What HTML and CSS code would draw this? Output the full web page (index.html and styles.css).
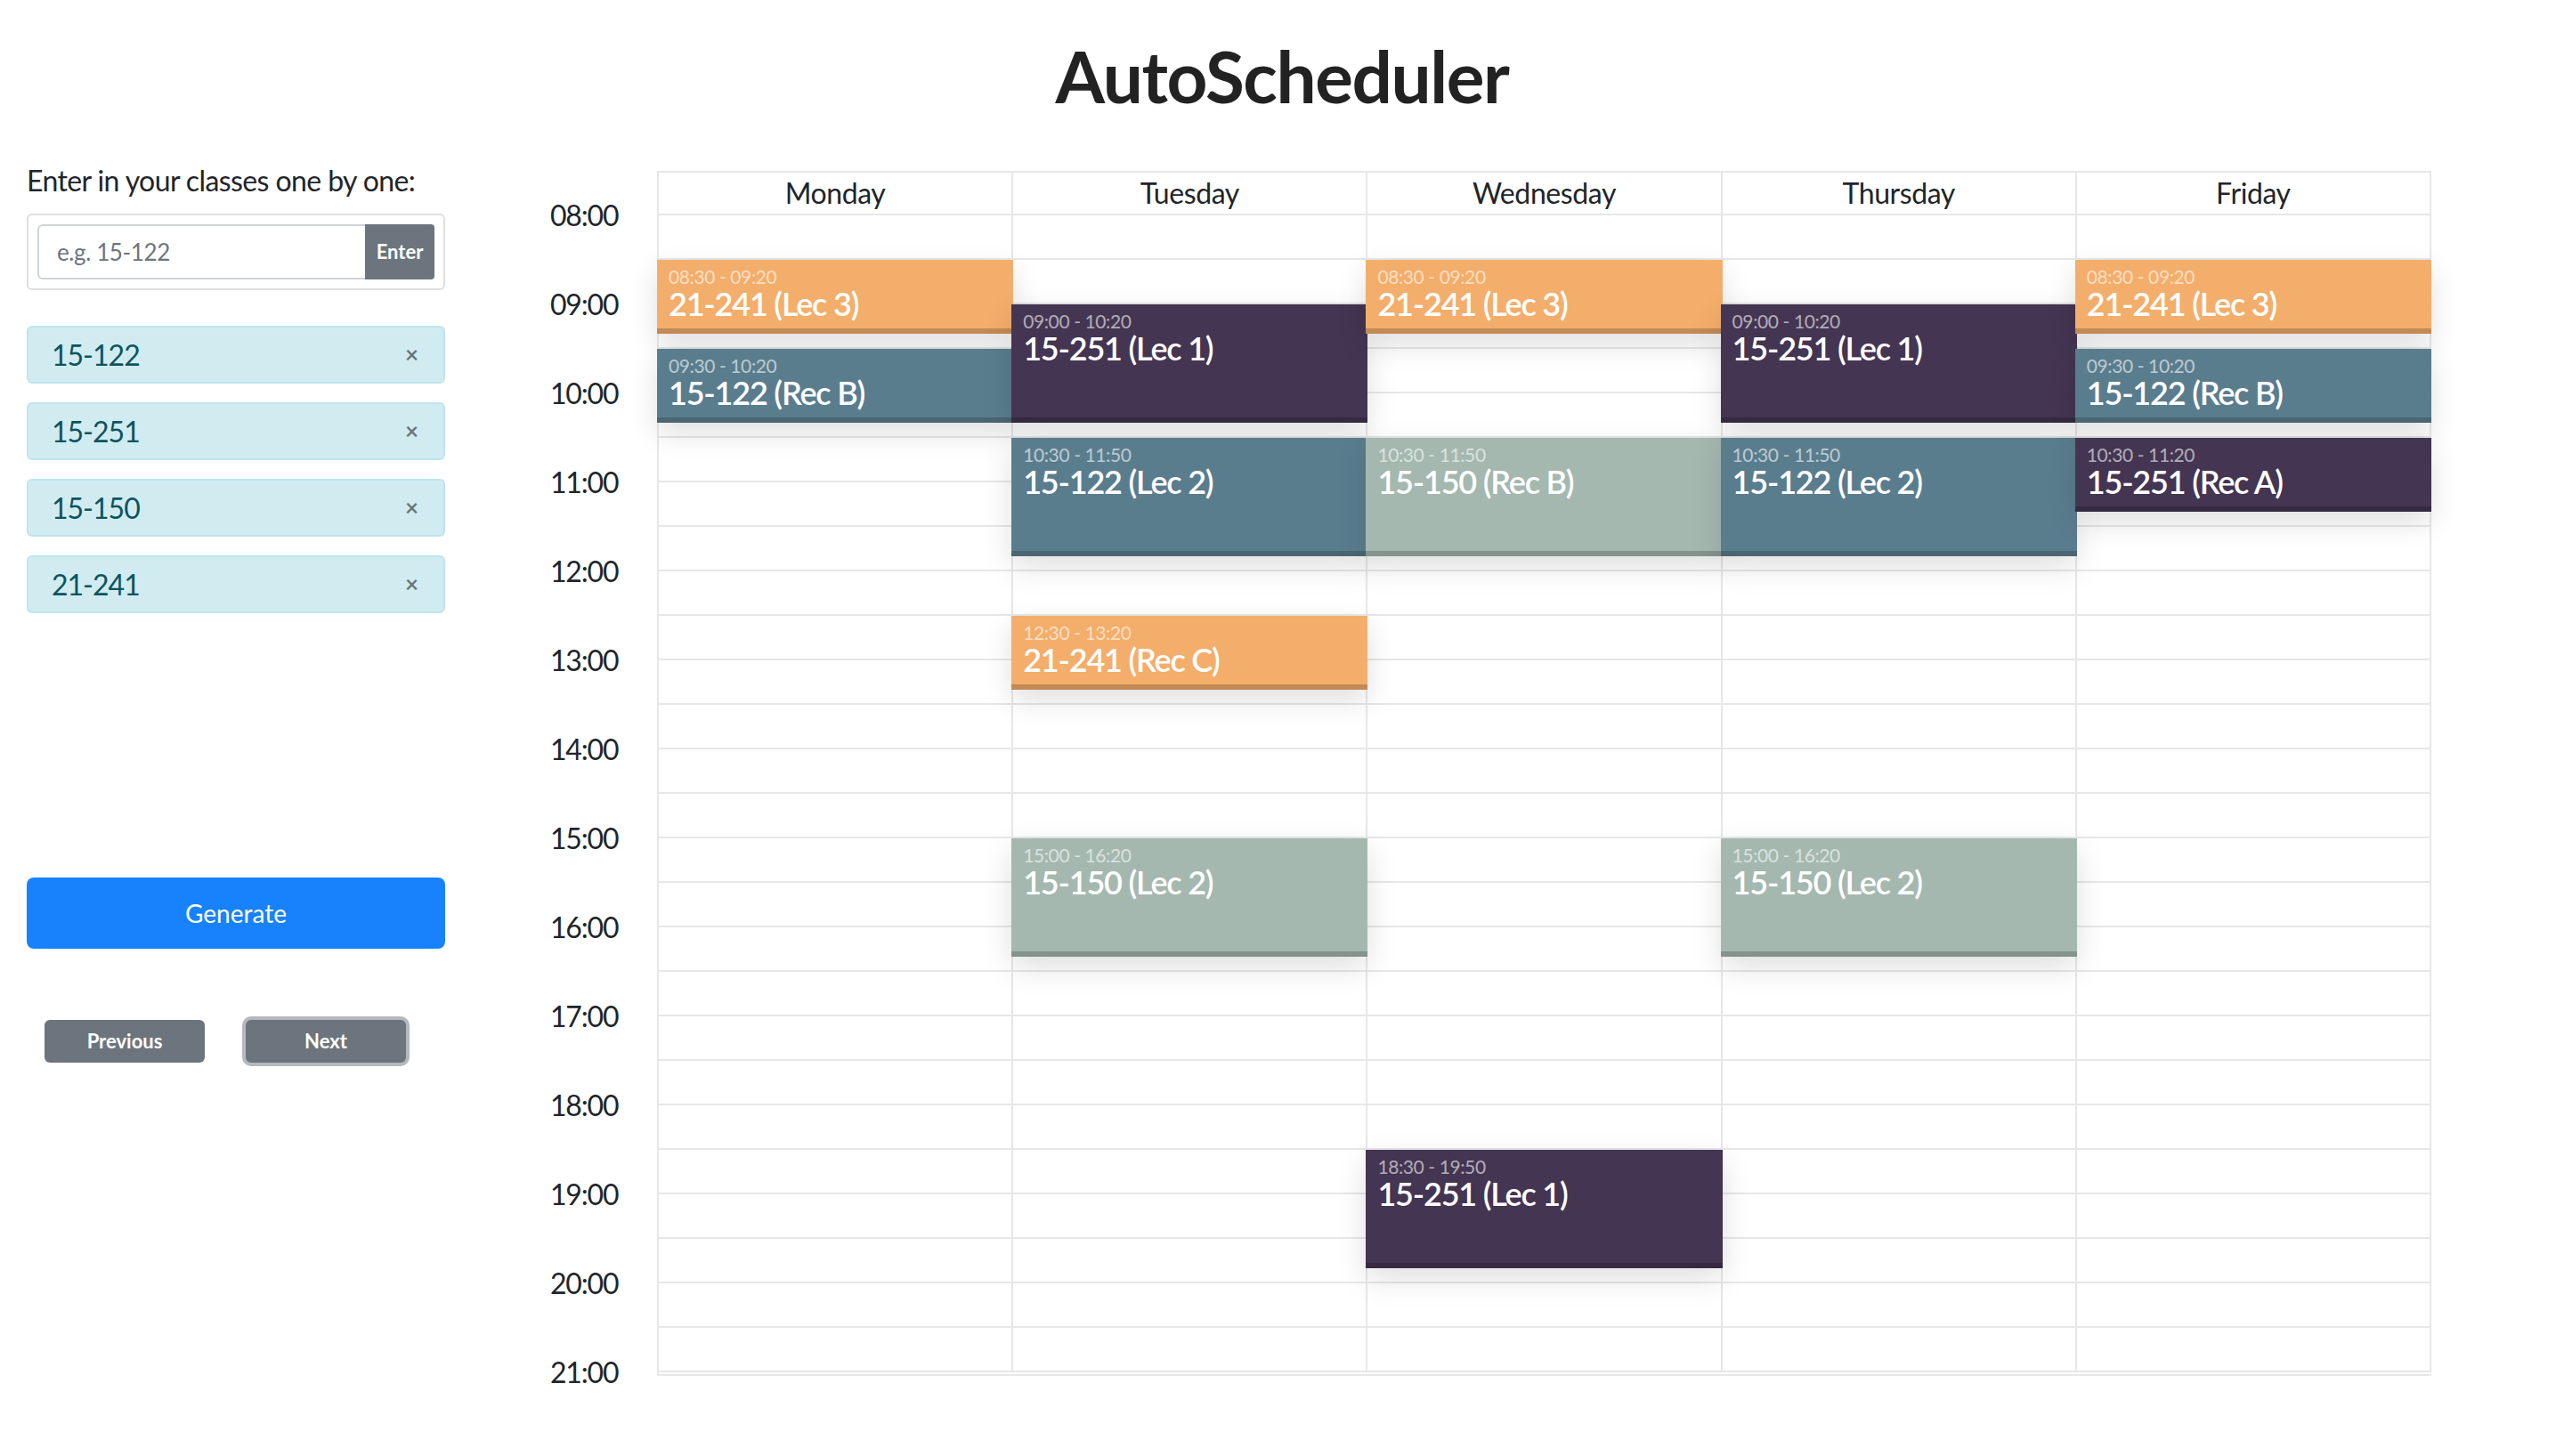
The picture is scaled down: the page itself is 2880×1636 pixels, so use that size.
FILE: index.html
```html
<!DOCTYPE html>
<html lang="en">
<head>
<meta charset="utf-8">
<title>AutoScheduler</title>
<link rel="stylesheet" href="styles.css">
</head>
<body>
<div class="app">
  <h1 class="title">AutoScheduler</h1>
  <div class="main">
    <aside class="sidebar">
      <p class="label">Enter in your classes one by one:</p>
      <div class="input-card">
        <input class="course-input" type="text" placeholder="e.g. 15-122">
        <button class="enter-btn" type="button">Enter</button>
      </div>
      <ul class="tags">
        <li class="tag"><span>15-122</span><span class="close">×</span></li>
        <li class="tag"><span>15-251</span><span class="close">×</span></li>
        <li class="tag"><span>15-150</span><span class="close">×</span></li>
        <li class="tag"><span>21-241</span><span class="close">×</span></li>
      </ul>
      <button class="generate" type="button">Generate</button>
      <div class="pager">
        <button class="pager-btn" type="button">Previous</button>
        <button class="pager-btn focused" type="button">Next</button>
      </div>
    </aside>

    <section class="schedule">
      <div class="times">
        <div class="time">08:00</div>
        <div class="time">09:00</div>
        <div class="time">10:00</div>
        <div class="time">11:00</div>
        <div class="time">12:00</div>
        <div class="time">13:00</div>
        <div class="time">14:00</div>
        <div class="time">15:00</div>
        <div class="time">16:00</div>
        <div class="time">17:00</div>
        <div class="time">18:00</div>
        <div class="time">19:00</div>
        <div class="time">20:00</div>
        <div class="time">21:00</div>
      </div>

      <div class="table-wrap">
        <div class="grid" id="grid">
          <div class="head">Monday</div>
          <div class="head">Tuesday</div>
          <div class="head">Wednesday</div>
          <div class="head">Thursday</div>
          <div class="head">Friday</div>
        </div>

        <div class="events">
          <div class="day">
            <div class="event orange" style="top:25px;height:41.67px"><div class="ev-time">08:30 - 09:20</div><div class="ev-name">21-241 (Lec 3)</div></div>
            <div class="event blue" style="top:75px;height:41.67px"><div class="ev-time">09:30 - 10:20</div><div class="ev-name">15-122 (Rec B)</div></div>
          </div>
          <div class="day">
            <div class="event purple" style="top:50px;height:66.67px"><div class="ev-time">09:00 - 10:20</div><div class="ev-name">15-251 (Lec 1)</div></div>
            <div class="event blue" style="top:125px;height:66.67px"><div class="ev-time">10:30 - 11:50</div><div class="ev-name">15-122 (Lec 2)</div></div>
            <div class="event orange" style="top:225px;height:41.67px"><div class="ev-time">12:30 - 13:20</div><div class="ev-name">21-241 (Rec C)</div></div>
            <div class="event sage" style="top:350px;height:66.67px"><div class="ev-time">15:00 - 16:20</div><div class="ev-name">15-150 (Lec 2)</div></div>
          </div>
          <div class="day">
            <div class="event orange" style="top:25px;height:41.67px"><div class="ev-time">08:30 - 09:20</div><div class="ev-name">21-241 (Lec 3)</div></div>
            <div class="event sage" style="top:125px;height:66.67px"><div class="ev-time">10:30 - 11:50</div><div class="ev-name">15-150 (Rec B)</div></div>
            <div class="event purple" style="top:525px;height:66.67px"><div class="ev-time">18:30 - 19:50</div><div class="ev-name">15-251 (Lec 1)</div></div>
          </div>
          <div class="day">
            <div class="event purple" style="top:50px;height:66.67px"><div class="ev-time">09:00 - 10:20</div><div class="ev-name">15-251 (Lec 1)</div></div>
            <div class="event blue" style="top:125px;height:66.67px"><div class="ev-time">10:30 - 11:50</div><div class="ev-name">15-122 (Lec 2)</div></div>
            <div class="event sage" style="top:350px;height:66.67px"><div class="ev-time">15:00 - 16:20</div><div class="ev-name">15-150 (Lec 2)</div></div>
          </div>
          <div class="day">
            <div class="event orange" style="top:25px;height:41.67px"><div class="ev-time">08:30 - 09:20</div><div class="ev-name">21-241 (Lec 3)</div></div>
            <div class="event blue" style="top:75px;height:41.67px"><div class="ev-time">09:30 - 10:20</div><div class="ev-name">15-122 (Rec B)</div></div>
            <div class="event purple" style="top:125px;height:41.67px"><div class="ev-time">10:30 - 11:20</div><div class="ev-name">15-251 (Rec A)</div></div>
          </div>
        </div>
      </div>
    </section>
  </div>
</div>
<script>
  (function () {
    var grid = document.getElementById('grid');
    for (var i = 0; i < 26 * 5; i++) {
      var c = document.createElement('div');
      c.className = 'cell';
      grid.appendChild(c);
    }
  })();
</script>
</body>
</html>
```

FILE: styles.css
```css
* { box-sizing: border-box; }

html, body {
  margin: 0;
  padding: 0;
  background: #ffffff;
}

body {
  font-family: Lato, "Liberation Sans", sans-serif;
  color: #212529;
}

.app {
  zoom: 2;
  width: 1440px;
  min-height: 818px;
}

.title {
  margin: 18.5px 0 0;
  text-align: center;
  font-size: 40px;
  line-height: 48px;
  font-weight: 700;
  letter-spacing: -0.7px;
  color: #222;
}

.main {
  display: flex;
  margin-top: 13.5px;
}

/* Sidebar */
.sidebar {
  width: 235px;
  margin-left: 15px;
  padding-top: 9.6px;
  flex: none;
}

.label {
  margin: 0 0 6.4px;
  font-size: 16px;
  line-height: 24px;
  letter-spacing: -0.3px;
}

.input-card {
  display: flex;
  height: 43px;
  padding: 5px;
  border: 1px solid #dfdfdf;
  border-radius: 3px;
}

.course-input {
  flex: 1;
  min-width: 0;
  height: 31px;
  padding: 0 10px;
  border: 1px solid #ced4da;
  border-right: none;
  border-radius: 3px 0 0 3px;
  font-family: inherit;
  font-size: 13px;
  letter-spacing: -0.2px;
  color: #495057;
  outline: none;
}

.course-input::placeholder { color: #6c757d; }

.enter-btn {
  width: 39px;
  height: 31px;
  padding: 0;
  border: none;
  border-radius: 0 2px 2px 0;
  background: #6c757d;
  color: #fff;
  font-family: inherit;
  font-size: 11px;
  font-weight: 700;
}

.tags {
  list-style: none;
  margin: 20px 0 0;
  padding: 0;
  display: flex;
  flex-direction: column;
  gap: 10.5px;
}

.tag {
  display: flex;
  align-items: center;
  justify-content: space-between;
  height: 32.5px;
  padding: 0 14px 0 13px;
  background: #d1ecf1;
  border: 1px solid #bee5eb;
  border-radius: 3px;
  color: #0c5460;
  font-size: 16px;
  letter-spacing: -0.5px;
}

.close {
  font-size: 13px;
  font-weight: 700;
  color: rgba(0, 0, 0, 0.5);
  line-height: 1;
  letter-spacing: 0;
}

.generate {
  display: block;
  width: 100%;
  height: 40px;
  margin-top: 148.5px;
  border: none;
  border-radius: 4px;
  background: #1782fc;
  color: #fff;
  font-family: inherit;
  font-size: 14px;
}

.pager {
  display: flex;
  gap: 23px;
  margin-top: 40px;
  padding-left: 10px;
}

.pager-btn {
  width: 90px;
  height: 24px;
  padding: 0;
  border: none;
  border-radius: 3px;
  background: #6c757d;
  color: #fff;
  font-family: inherit;
  font-size: 11px;
  font-weight: 700;
}

.pager-btn.focused {
  box-shadow: 0 0 0 2px rgba(130, 138, 145, 0.6);
}

/* Schedule */
.schedule {
  display: flex;
  margin-left: 59px;
  padding-top: 16px;
}

.times {
  width: 60px;
  flex: none;
}

.time {
  height: 50px;
  line-height: 50px;
  font-size: 16px;
  letter-spacing: -0.6px;
}

.table-wrap {
  position: relative;
  width: 996.5px;
  flex: none;
}

.grid {
  display: grid;
  grid-template-columns: repeat(5, 1fr);
  grid-template-rows: 24px;
  grid-auto-rows: 25px;
  border-top: 1px solid #e7e7e7;
  border-left: 1px solid #e7e7e7;
  border-bottom: 1px solid #e7e7e7;
  padding-bottom: 1px;
}

.head {
  border-right: 1px solid #e7e7e7;
  border-bottom: 1px solid #e7e7e7;
  text-align: center;
  font-size: 16px;
  line-height: 23px;
  letter-spacing: -0.2px;
}

.cell {
  border-right: 1px solid #e7e7e7;
  border-bottom: 1px solid #e7e7e7;
}

.events {
  position: absolute;
  top: 25px;
  left: 0;
  width: calc(100% - 1px);
  bottom: 0;
  display: grid;
  grid-template-columns: repeat(5, 1fr);
}

.day {
  position: relative;
}

.event {
  position: absolute;
  left: 0;
  width: calc(100% + 1px);
  padding: 3px 6.5px 0;
  border-bottom: 3px solid rgba(0, 0, 0, 0.2);
  box-shadow: 0 6px 16px rgba(0, 0, 0, 0.13);
  color: #fff;
  overflow: hidden;
}

.ev-time {
  font-size: 10.5px;
  line-height: 12.6px;
  letter-spacing: -0.2px;
  color: rgba(255, 255, 255, 0.6);
}

.ev-name {
  font-size: 18px;
  line-height: 18px;
  font-weight: 600;
  letter-spacing: -0.6px;
  white-space: nowrap;
}

.orange { background: #f3ae6b; border-bottom-color: #c38a55; }
.blue   { background: #5a7d8e; border-bottom-color: #4a6672; }
.purple { background: #443552; border-bottom-color: #362a42; }
.sage   { background: #a4b8b0; border-bottom-color: #83948d; }
```
